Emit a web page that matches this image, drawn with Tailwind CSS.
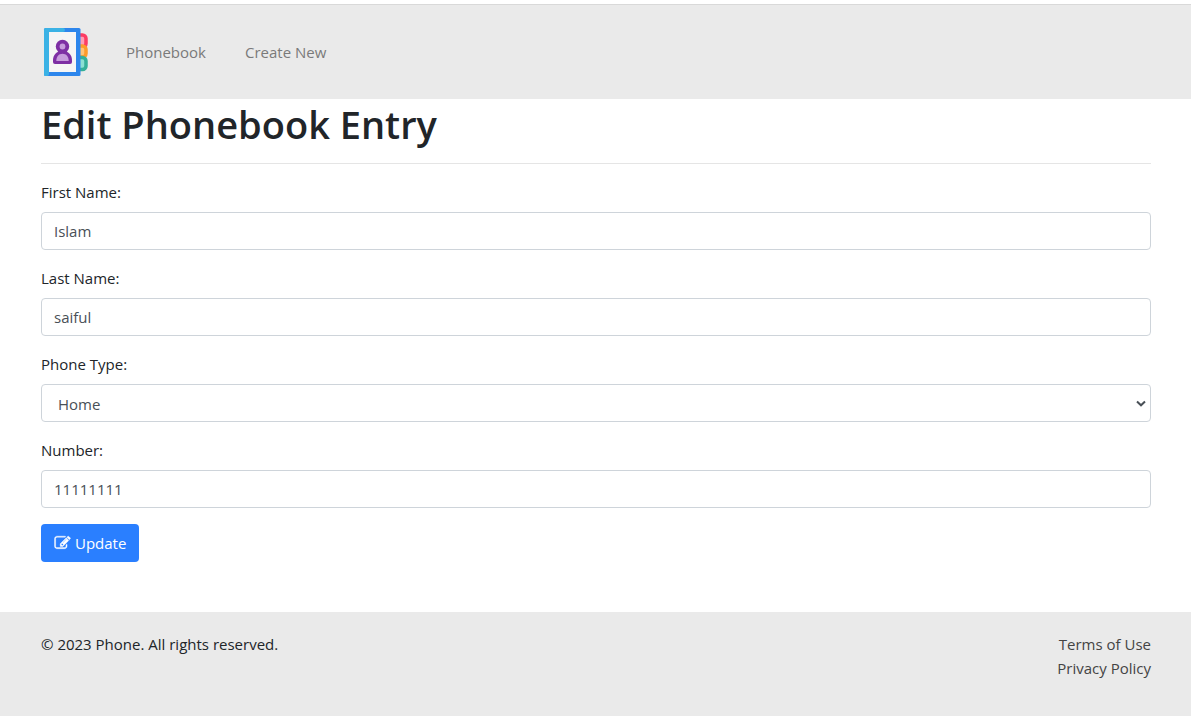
<!DOCTYPE html>
<html lang="en">
<head>
<meta charset="utf-8">
<meta name="viewport" content="width=device-width, initial-scale=1">
<title>Edit Phonebook Entry</title>
<script src="https://cdn.jsdelivr.net/npm/@tailwindcss/browser@4"></script>
</head>
<body class="bg-white pt-1 font-['Open_Sans',sans-serif] text-[15px] leading-6 text-[#212529]">
<header class="border-t border-[#d9d9d9] bg-[#eaeaea]">
  <nav class="flex items-center py-[22px] pr-10 pl-[41px]">
    <a href="#" aria-label="Home" class="mr-[35px] block">
      <svg class="size-[50px]" viewBox="0 0 50 50" aria-hidden="true">
        <rect x="34" y="8" width="11" height="12" rx="3.500" fill="#ff9eb5" stroke="#fd3c63" stroke-width="3.500"/>
        <rect x="34" y="19" width="11" height="11" rx="3.500" fill="#ffc477" stroke="#fd9b2a" stroke-width="3.500"/>
        <rect x="34" y="30.500" width="11" height="12" rx="3.500" fill="#8be0d3" stroke="#34b09a" stroke-width="3.500"/>
        <rect x="3" y="1" width="36.500" height="48" rx="1.500" fill="#2d86ec"/>
        <path d="M4.500 1H22a2 2 0 0 1 0 4H8v42a2 2 0 0 1-2 2H4.500A1.500 1.500 0 0 1 3 47.500v-45A1.500 1.500 0 0 1 4.500 1Z" fill="#3bb2e5"/>
        <rect x="8" y="5" width="27" height="40" fill="#f5f5f5"/>
        <path d="M17.500 24.500h8C29 26 31 29.500 31 33.500V35a2 2 0 0 1-2 2H14a2 2 0 0 1-2-2v-1.500c0-4 2-7.500 5.500-9Z" fill="#7e2fa4"/>
        <circle cx="21.500" cy="19.500" r="6.700" fill="#7e2fa4"/>
        <circle cx="21.500" cy="19.500" r="2.900" fill="#c79bdc"/>
        <path d="M15.300 34c0-4.500 2.500-7.300 6.200-7.300s6.200 2.800 6.200 7.300Z" fill="#c79bdc"/>
      </svg>
    </a>
    <ul class="flex items-center gap-[39px] text-[#7a7a7a]">
      <li><a href="#">Phonebook</a></li>
      <li><a href="#">Create New</a></li>
    </ul>
  </nav>
</header>

<main class="pr-10 pb-[50px] pl-[41px]">
  <h1 class="pt-px text-[38px] leading-[48px] font-semibold">Edit Phonebook Entry</h1>
  <hr class="mt-[15px] mb-4 border-[#e5e5e5]">
  <form>
    <div class="mb-4">
      <label for="first" class="mb-2 block">First Name:</label>
      <input id="first" type="text" value="Islam" class="block h-[38px] w-full rounded border border-[#ced4da] bg-white px-3 text-[#495057]">
    </div>
    <div class="mb-4">
      <label for="last" class="mb-2 block">Last Name:</label>
      <input id="last" type="text" value="saiful" class="block h-[38px] w-full rounded border border-[#ced4da] bg-white px-3 text-[#495057]">
    </div>
    <div class="mb-4">
      <label for="type" class="mb-2 block">Phone Type:</label>
      <div class="relative">
        <select id="type" class="block h-[38px] w-full appearance-none rounded border border-[#ced4da] bg-white px-4 pt-px text-[#495057]">
          <option>Home</option>
          <option>Work</option>
          <option>Mobile</option>
        </select>
        <svg class="pointer-events-none absolute top-4 right-1 h-2 w-3" viewBox="0 0 12 8" fill="none" stroke="#495057" stroke-width="2" aria-hidden="true"><path d="M2 1.500 6 5.300l4-3.800"/></svg>
      </div>
    </div>
    <div class="mb-4">
      <label for="number" class="mb-2 block">Number:</label>
      <input id="number" type="text" value="11111111" class="block h-[38px] w-full rounded border border-[#ced4da] bg-white px-3 text-[#495057]">
    </div>
    <button type="submit" class="flex h-[38px] items-center gap-1 rounded bg-[#2a7fff] px-[13px] text-white">
      <svg class="h-4 w-[17px]" viewBox="0 0 1792 1792" fill="currentColor" stroke="currentColor" stroke-width="40" aria-hidden="true"><path d="M888 1184l116-116-152-152-116 116v56h96v96h56zm440-720q-16-16-33 1l-350 350q-17 17-1 33t33-1l350-350q17-17 1-33zm80 594v190q0 119-84.500 203.500t-203.500 84.500h-832q-119 0-203.500-84.500t-84.500-203.500v-832q0-119 84.500-203.500t203.500-84.500h832q63 0 117 25 15 7 18 23 3 17-9 29l-49 49q-14 14-32 8-23-6-45-6h-832q-66 0-113 47t-47 113v832q0 66 47 113t113 47h832q66 0 113-47t47-113v-126q0-13 9-22l64-64q15-15 35-7t20 29zm-96-738l288 288-672 672h-288v-288zm444 132l-92 92-288-288 92-92q28-28 68-28t68 28l152 152q28 28 28 68t-28 68z"/></svg>
      <span>Update</span>
    </button>
  </form>
</main>

<footer class="flex items-start justify-between bg-[#eaeaea] pt-5 pr-10 pb-9 pl-[41px]">
  <p>© 2023 Phone. All rights reserved.</p>
  <ul class="text-right text-[#444444]">
    <li><a href="#">Terms of Use</a></li>
    <li><a href="#">Privacy Policy</a></li>
  </ul>
</footer>
</body>
</html>
